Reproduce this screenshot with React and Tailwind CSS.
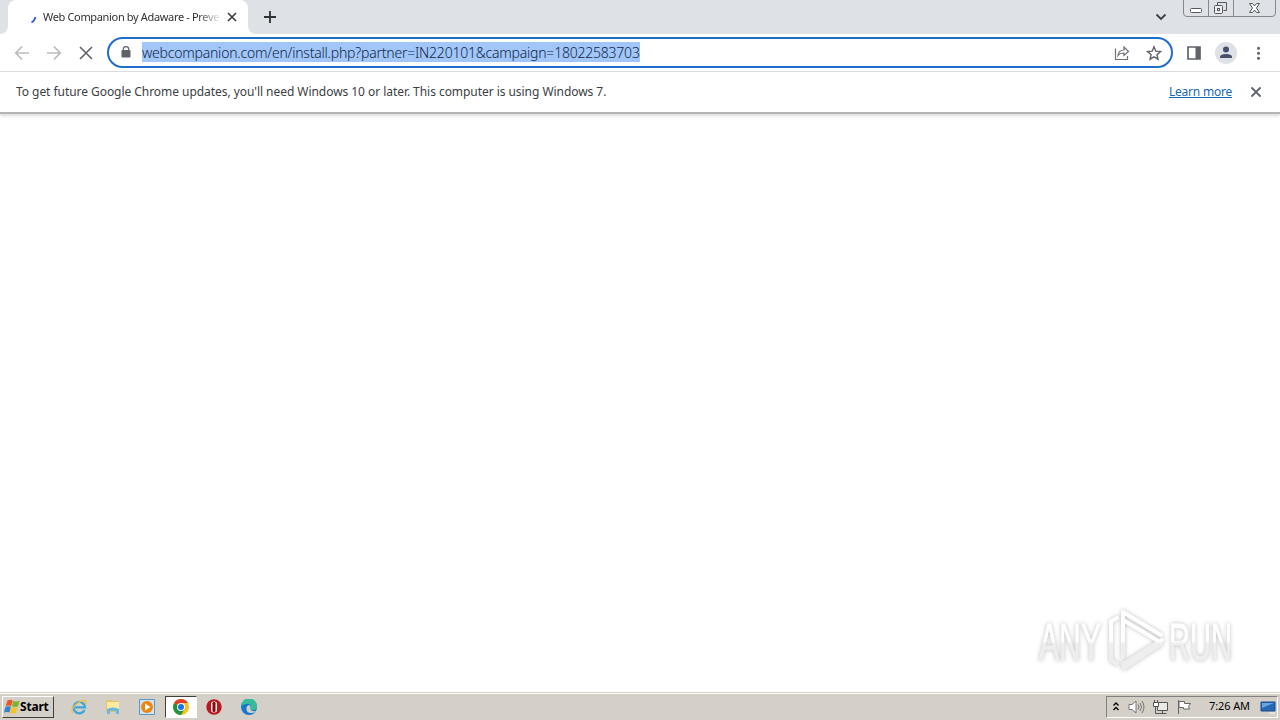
import { useState } from 'react';

function Logo() {
  return (
    <svg className="h-[68px] w-[204px] overflow-visible drop-shadow-[0_0_2px_rgba(0,0,0,0.26)]" viewBox="0 0 204 68" fill="none">
      <defs>
        <linearGradient id="fade" gradientUnits="userSpaceOnUse" x1="0" y1="6" x2="0" y2="62">
          <stop offset="0.5" stopColor="#ffffff" />
          <stop offset="0.55" stopColor="#eeeeee" />
        </linearGradient>
      </defs>
      <g fontFamily="'Liberation Sans', Arial, sans-serif" fontSize="51" fill="url(#fade)" stroke="url(#fade)" strokeWidth="0.8">
        <text x="5" y="53" textLength="62" lengthAdjust="spacingAndGlyphs">ANY</text>
        <text x="135" y="53" textLength="63" lengthAdjust="spacingAndGlyphs">RUN</text>
      </g>
      <g stroke="url(#fade)" strokeWidth="4" strokeLinejoin="round" strokeLinecap="round">
        <path d="M83 11l-6 3.500V53l6 4M89 50V5l38 23M89 13l37 22M128 33L89 57l1 4 37-24" />
      </g>
    </svg>
  );
}

function ChromeIcon() {
  return (
    <svg className="h-4 w-4" viewBox="0 0 16 16">
      <circle cx="8" cy="8" r="8" fill="#fbc116" />
      <path d="M8 8L1.1 4A8 8 0 0 1 14.9 4H8z" fill="#e33b2e" />
      <path d="M1.1 4A8 8 0 0 0 8 16l3.5-6L8 8z" fill="#229342" />
      <circle cx="8" cy="8" r="4" fill="#fff" />
      <circle cx="8" cy="8" r="3" fill="#1a73e8" />
    </svg>
  );
}

function TabStrip({ title }) {
  return (
    <div className="flex h-[34px] items-start bg-[#dee1e6]">
      <div className="h-[34px] w-2 bg-white">
        <div className="h-full rounded-br-lg bg-[#dee1e6]" />
      </div>
      <div className="flex h-[34px] w-60 items-center rounded-t-lg bg-white pl-[22px] pr-2">
        <svg className="mr-1 h-4 w-[9px] shrink-0" viewBox="0 0 9 16" fill="none" stroke="#2864d8" strokeWidth="1.8">
          <path d="M1.500 13.500q3-1.500 4-5.500" />
        </svg>
        <span className="w-[176px] whitespace-nowrap text-[11px] tracking-[-0.34px] text-[#303134] [mask-image:linear-gradient(to_right,black_88%,rgba(0,0,0,0.1))]">{title}</span>
        <svg className="ml-[5px] h-4 w-4 shrink-0" viewBox="0 0 16 16" stroke="#3c4043" strokeWidth="1.7">
          <path d="M4 4l8 8M12 4l-8 8" />
        </svg>
      </div>
      <div className="h-[34px] w-2 bg-white">
        <div className="h-full rounded-bl-lg bg-[#dee1e6]" />
      </div>
      <svg className="ml-[6px] mt-[9px] h-4 w-4" viewBox="0 0 16 16" stroke="#303134" strokeWidth="1.8">
        <path d="M8 2v12M2 8h12" />
      </svg>
      <svg className="ml-auto mr-[14px] mt-[9px] h-4 w-4" viewBox="0 0 16 16" fill="none" stroke="#3c4043" strokeWidth="1.8">
        <path d="M3.5 5.5L8 10l4.5-4.5" />
      </svg>
      <svg className="mr-1 h-[18px] w-[93px]" viewBox="0 0 93 18" fill="none" stroke="#85888e">
        <path d="M.5 0v13q0 3.500 3.500 3.500h85q3.500 0 3.500-3.500V0M25.500 0v16.500M50.500 0v16.500" />
        <rect x="7.500" y="8.500" width="11" height="4" rx="1" fill="#fff" stroke="#56595f" />
        <path d="M34.500 5.500v-3h9v8h-3" stroke="#56595f" />
        <rect x="31.500" y="5.500" width="8" height="8" rx="1" fill="#eee" stroke="#56595f" />
        <rect x="34.500" y="8.500" width="2" height="2" stroke="#56595f" />
        <path d="M66.500 3.500h3l2 2.500 2-2.500h3L73.500 8l3 4.500h-3l-2-2.500-2 2.500h-3l3-4.500z" fill="#fff" stroke="#56595f" />
      </svg>
    </div>
  );
}

function Toolbar({ url }) {
  return (
    <div className="flex h-[38px] items-center border-b border-[#dadce0] pl-[14px]">
      <svg className="h-4 w-4" viewBox="0 0 16 16" fill="none" stroke="#babcbe" strokeWidth="1.7">
        <path d="M15 8H2M8 1.500L1.800 8 8 14.500" />
      </svg>
      <svg className="ml-4 h-4 w-4" viewBox="0 0 16 16" fill="none" stroke="#babcbe" strokeWidth="1.7">
        <path d="M1 8h13M8 1.500L14.200 8 8 14.500" />
      </svg>
      <svg className="ml-4 h-4 w-4" viewBox="0 0 16 16" stroke="#5f6368" strokeWidth="1.6">
        <path d="M2 2l12 12M14 2L2 14" />
      </svg>
      <div className="ml-[13px] flex h-[31px] w-[1066px] items-center rounded-full border-2 border-[#1f6dca] bg-white pl-3 pr-[9px]">
        <svg className="mb-px mr-[11px] h-3 w-[10px]" viewBox="0 0 10 12">
          <rect x=".5" y="4" width="9" height="7.500" rx="1" fill="#5f6368" />
          <path d="M2.300 5V3a2.700 2.300 0 0 1 5.400 0v2" fill="none" stroke="#5f6368" strokeWidth="1.200" />
        </svg>
        <span className="mb-px h-5 w-[498px] whitespace-nowrap bg-[#a2c6fa] text-[14px] font-light leading-[21px] tracking-[-0.22px] text-[#0e2748]">{url}</span>
        <svg className="ml-auto h-4 w-4" viewBox="0 0 16 16" fill="none" stroke="#6f7378" strokeWidth="1.2">
          <path d="M1.500 3.500v11h12V11M4 10.500c.5-4 2.500-5.500 6-5.500V2l4.500 4.500-4.500 4V8C7.500 8 5.500 8.500 4 10.500z" />
        </svg>
        <svg className="ml-4 h-4 w-4" viewBox="0 0 16 16" fill="none" stroke="#5f6368" strokeWidth="1.4">
          <path d="M8 1.800l1.800 4.400 4.700.4-3.600 3.100 1.100 4.500L8 11.800l-4 2.400 1.100-4.500-3.600-3.100 4.700-.4z" />
        </svg>
      </div>
      <svg className="ml-[13px] h-4 w-4" viewBox="0 0 16 16">
        <path d="M2 2h12v12H2z" fill="none" stroke="#5f6368" strokeWidth="1.7" />
        <path d="M9.500 2H14v12H9.500z" fill="#5f6368" />
      </svg>
      <svg className="ml-[13px] h-[22px] w-[22px]" viewBox="0 0 22 22" fill="#47506a">
        <circle cx="11" cy="11" r="11" fill="#dee1e6" />
        <circle cx="11" cy="7.500" r="3" />
        <path d="M5 16v-1.500Q5.500 12 11 12t6 2.500V16z" />
      </svg>
      <svg className="ml-[14px] h-4 w-4" viewBox="0 0 16 16" fill="#5f6368">
        <circle cx="7.500" cy="3.300" r="1.500" />
        <circle cx="7.500" cy="8.300" r="1.500" />
        <circle cx="7.500" cy="13.300" r="1.500" />
      </svg>
    </div>
  );
}

function Infobar({ onClose }) {
  return (
    <div className="flex h-[42px] items-center border-b-2 border-[#b4b4b4] bg-white px-4 shadow-[0_2px_3px_rgba(0,0,0,0.14)]">
      <span className="whitespace-nowrap text-[12px] tracking-[-0.05px] text-[#3c4043]">
        To get future Google Chrome updates, you'll need Windows 10 or later. This computer is using Windows 7.
      </span>
      <a href="#" className="ml-auto text-[12px] tracking-[-0.22px] text-[#1967b8] underline">Learn more</a>
      <button onClick={onClose} className="ml-4">
        <svg className="h-4 w-4" viewBox="0 0 16 16" stroke="#5f6368" strokeWidth="1.8">
          <path d="M3.500 3.500l9 9M12.500 3.500l-9 9" />
        </svg>
      </button>
    </div>
  );
}

function Taskbar() {
  return (
    <div className="flex h-[28px] items-center border-t border-[#d4d0c8] bg-[#d4d0c8] pl-[2px] shadow-[inset_0_1px_0_#fff]">
      <button className="flex h-[22px] w-[52px] items-center border border-b-[#404040] border-l-white border-r-[#404040] border-t-white bg-[#d4d0c8] pl-[1px]">
        <svg className="h-4 w-4 shrink-0" viewBox="0 0 16 16">
          <path d="M3.500 1.500q3-1.500 5.300.2L7.200 7Q4.500 5.800 1.800 7z" fill="#e8562c" />
          <path d="M9.300 2q3 1 6.500-.5L14 7.500q-3 1-6-.2z" fill="#78b530" />
          <path d="M1.500 7.700q3-1 5.500 0L5.500 13.500Q3 12.300 0 13.500z" fill="#3682d0" />
          <path d="M7.600 8q3 1.300 6 .3L12 14q-3 1-6-.3z" fill="#f8c51e" />
        </svg>
        <span className="text-[12px] font-bold tracking-[-0.2px] text-black">Start</span>
      </button>
      <svg className="ml-[17px] h-4 w-4" viewBox="0 0 16 16" fill="none">
        <path d="M13.500 11A5.700 5.700 0 1 1 14 8.300H4" stroke="#3ca6df" strokeWidth="2.3" />
        <path d="M2 14C-3 10 11-1 15 2q1 1-.5 3" stroke="#eec23b" strokeWidth="1.3" />
      </svg>
      <svg className="ml-[18px] h-4 w-4" viewBox="0 0 16 16">
        <path d="M1 1h5l1 1h7v11H1z" fill="#e5c568" />
        <path d="M2 3h12v8H2z" fill="#fae99e" />
        <path d="M2 10q6-3 12 0v5h-3v-3H5v3H2z" fill="#69b8e2" />
      </svg>
      <svg className="ml-[18px] h-4 w-4" viewBox="0 0 16 16">
        <path d="M.5.5h15v15H.5z" fill="#cce4f6" stroke="#5b97c8" />
        <circle cx="8" cy="8" r="6" fill="#ee860d" />
        <path d="M6 4.500v7L11.500 8z" fill="#fff" />
      </svg>
      <div className="ml-[10px] flex h-[22px] w-8 items-center justify-center border border-b-white border-l-[#404040] border-r-white border-t-[#404040] bg-white">
        <ChromeIcon />
      </div>
      <svg className="ml-[9px] h-4 w-4" viewBox="0 0 16 16">
        <circle cx="8" cy="8" r="7.700" fill="#b91822" />
        <rect x="5" y="2.500" width="6" height="11" rx="2.500" fill="#eee" />
        <rect x="6.500" y="3" width="3" height="10" rx="1.200" fill="#850c13" />
      </svg>
      <svg className="ml-[19px] h-4 w-4" viewBox="0 0 16 16">
        <circle cx="8" cy="8" r="8" fill="#1677cf" />
        <path d="M0 7A8 8 0 0 1 16 7.500Q16 11 12 11T9 9Q11 6 8 5T0 7z" fill="#35bd9b" />
        <path d="M9 9q1.500-2-1-3-3 1-2.500 4.500T10 14q3 .5 5-2-5 1-6-3z" fill="#d4d0c8" />
      </svg>
      <div className="ml-auto mr-[2px] flex h-[22px] w-[172px] items-center border border-b-white border-l-[#808080] border-r-white border-t-[#808080] pl-[5px]">
        <svg className="h-3 w-2" viewBox="0 0 8 12" fill="none" stroke="#000" strokeWidth="1.3">
          <path d="M1.500 4.500L4 2l2.500 2.500M1.500 9L4 6.500 6.500 9" />
        </svg>
        <svg className="ml-[8px] h-4 w-[17px]" viewBox="0 0 17 16" fill="none" stroke="#777">
          <path d="M1 5.500h3L8 2v12l-4-3.500H1z" fill="#fff" />
          <path d="M10 5.500q2 2.500 0 5M12 4q3 4 0 8M14 2q4 6 0 12" />
        </svg>
        <svg className="ml-[7px] h-4 w-4" viewBox="0 0 16 16" fill="#ece9e4" stroke="#555">
          <path d="M5.500 3.500h10v8h-10zM6.500 14.500h8M10.500 11.500v3" />
          <path d="M2.500 1v3M5.500 1v3M1.500 3.500h5v4h-5z" fill="#fff" />
          <path d="M3.500 8v6.500h4" fill="none" />
        </svg>
        <svg className="ml-[8px] h-4 w-4" viewBox="0 0 16 16" fill="#fff" stroke="#666">
          <path d="M2.500 1v14M3 2.500h5.500v2h6l-2 3 1 2.500h-6v-1.500H3z" />
        </svg>
        <span className="ml-[17px] whitespace-nowrap text-[11px] tracking-[-0.1px] text-black">7:26 AM</span>
        <svg className="ml-auto mr-px h-4 w-4" viewBox="0 0 16 16">
          <path d="M1 3h14v9H1z" fill="#2967b5" stroke="#164c8d" />
          <path d="M2 4h12L2 9z" fill="#68a6df" />
          <path d="M9 14h6" stroke="#f4f4f4" />
        </svg>
      </div>
    </div>
  );
}

export default function App() {
  const [showInfobar, setShowInfobar] = useState(true);

  return (
    <div className="relative flex h-screen w-screen flex-col overflow-hidden bg-white font-['Noto_Sans','DejaVu_Sans',sans-serif]">
      <TabStrip title="Web Companion by Adaware - Preve" />
      <Toolbar url="webcompanion.com/en/install.php?partner=IN220101&campaign=18022583703" />
      {showInfobar && <Infobar onClose={() => setShowInfobar(false)} />}
      <main className="flex flex-1 items-end justify-end pb-[17px] pr-[42px]">
        <Logo />
      </main>
      <Taskbar />
    </div>
  );
}
